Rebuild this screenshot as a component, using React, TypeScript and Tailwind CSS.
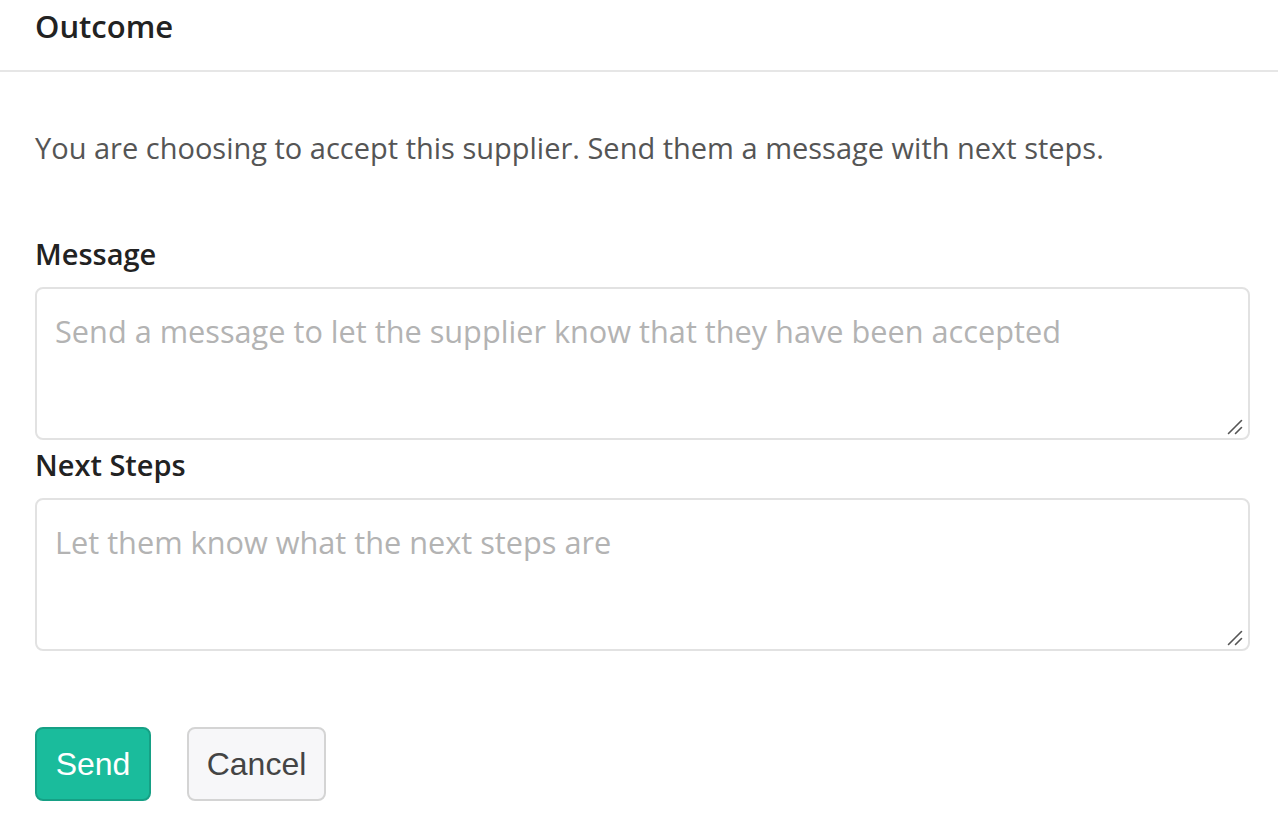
import React from 'react';

const Grip = () => (
  <svg className="pointer-events-none absolute bottom-[5px] right-[7px]" width="16" height="16" viewBox="0 0 16 16">
    <path d="M1.5 14.5 L14.5 1.5 M8.5 14.5 L14.5 8.5" stroke="#555" strokeWidth="1.6" strokeLinecap="round" />
  </svg>
);

const Field = ({ label, placeholder }: { label: string; placeholder: string }) => (
  <>
    <label className="block text-[29px] font-semibold leading-[38px] text-[#222]">{label}</label>
    <div className="relative mt-[14px] w-[1215px]">
      <textarea
        className="block h-[153px] w-full resize-none rounded-[8px] border-2 border-[#e2e2e2] px-[18px] py-[21px] text-[30.7px] leading-[42px] text-[#555] placeholder:text-[#b3b3b3] outline-none"
        placeholder={placeholder}
      />
      <Grip />
    </div>
  </>
);

const App = () => {
  return (
    <div className="min-h-screen bg-white" style={{ fontFamily: '"Open Sans", sans-serif' }}>
      <div className="h-[72px] border-b-2 border-[#e6e6e6] px-[35px] pt-[7px]">
        <h1 className="text-[31px] font-semibold leading-[38px] text-[#222]">Outcome</h1>
      </div>
      <div className="px-[35px]">
        <p className="mt-[55px] text-[29px] leading-[42px] text-[#555]">
          You are choosing to accept this supplier. Send them a message with next steps.
        </p>
        <div className="mt-[66px]">
          <Field label="Message" placeholder="Send a message to let the supplier know that they have been accepted" />
        </div>
        <div className="mt-[6px]">
          <Field label="Next Steps" placeholder="Let them know what the next steps are" />
        </div>
        <div className="mt-[76px] flex gap-[36px]" style={{ fontFamily: '"Liberation Sans", Arial, sans-serif' }}>
          <button className="h-[74px] w-[116px] rounded-[8px] border-2 border-[#16a085] bg-[#1abc9c] text-[32px] text-white">
            Send
          </button>
          <button className="h-[74px] w-[139px] rounded-[8px] border-2 border-[#d4d4d4] bg-[#f7f7f9] text-[32px] text-[#444]">
            Cancel
          </button>
        </div>
      </div>
    </div>
  );
};

export default App;
